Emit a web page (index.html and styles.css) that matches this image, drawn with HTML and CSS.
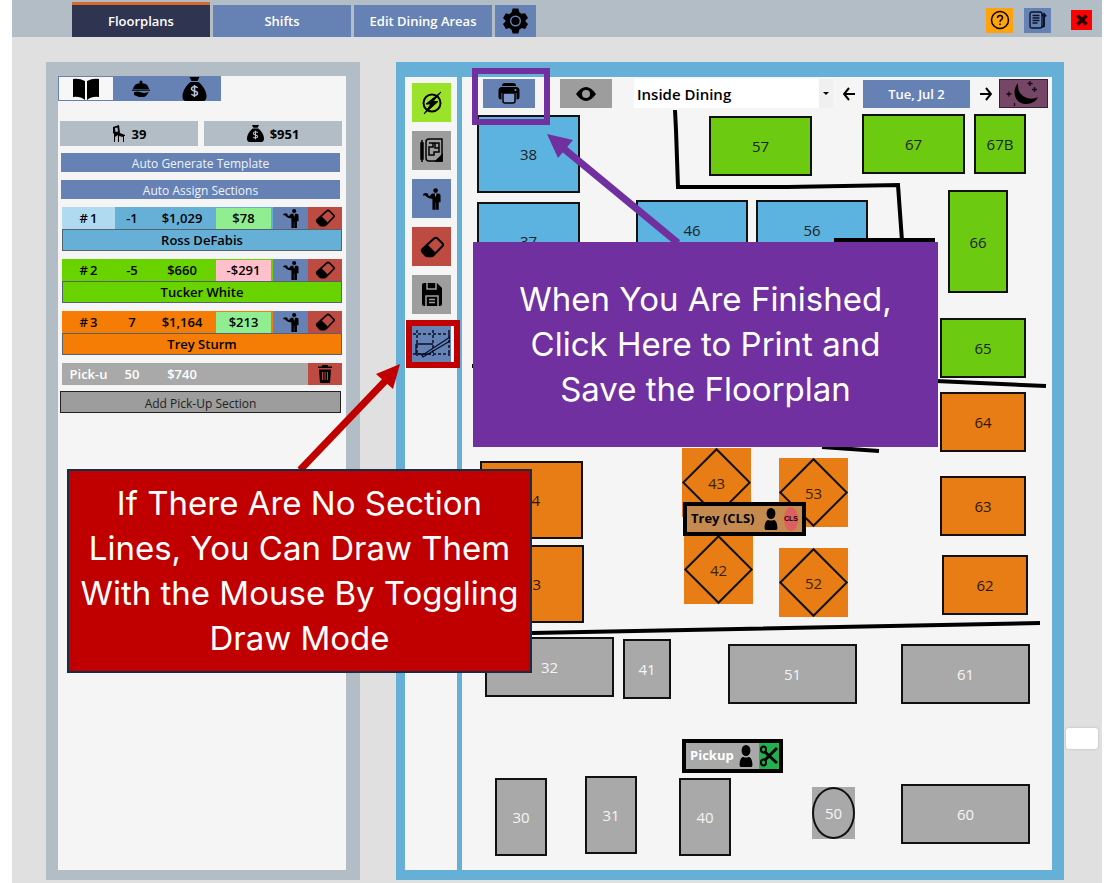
FILE: index.html
```html
<!DOCTYPE html>
<html lang="en">
<head>
<meta charset="utf-8">
<title>Floorplans</title>
<link rel="stylesheet" href="styles.css">
</head>
<body>
<svg class="defs" width="0" height="0" aria-hidden="true">
  <symbol id="i-bag" viewBox="0 0 24 24"><path d="M7 0h10l-2 4H9zM8 5h8c4 3 8 9 8 14 0 3-1 5-4 5H4c-3 0-4-2-4-5C0 14 4 8 8 5z"/><path d="M15 11c-1-2-6-2-6 1 0 2.500 6 1.500 6 4 0 3-5 3-6 1M12 8v12" fill="none" stroke="#b9c6dd" stroke-width="1.500"/></symbol>
  <symbol id="i-waiter" viewBox="0 0 20 24"><circle cx="14" cy="2.600" r="2.600"/><path d="M10 6h7.500q2 0 2 2v7.500h-2V24h-7V12L6 11 2.500 8.500l1-1.500 4 1.800z"/><path d="M0 8c0-3.600 6-3.600 6 0z"/><path d="M13 6l1 4 1-4z" fill="#8fa2cd"/><path d="M14 16v8" stroke="#53689a" stroke-width=".6"/></symbol>
  <symbol id="i-eraser" viewBox="0 0 24 22"><path d="M14 2.500 2.500 13q-1.500 1.500 0 3l3 3.500q1 .8 2 .8h4q1 0 2-1L22.500 10q1.200-1 0-2.500L17.500 2.500q-1.700-1.600-3.500 0z" fill="none" stroke="#000" stroke-width="2"/><path d="M7.500 8.500l8.500 8.500-3.500 3.300h-6L2 15z"/></symbol>
  <symbol id="i-person" viewBox="0 0 14 24"><ellipse cx="7" cy="6" rx="4.800" ry="6"/><path d="M0 22c0-6 2-9 4-9q3 1.500 6 0c2 0 4 3 4 9q0 2-2 2H2q-2 0-2-2z"/></symbol>
</svg>
<div class="app">
  <header class="topbar">
    <nav class="tabs">
      <button class="tab tab-active">Floorplans</button>
      <button class="tab">Shifts</button>
      <button class="tab">Edit Dining Areas</button>
      <button class="tab tab-gear" aria-label="Settings"><svg width="25" height="26" viewBox="0 0 26 26"><path d="M10 0h6l1 4 2.500 1.500L23 5l3 5-2.600 2.600v1L26 16l-3 5.200-3.600-1L17 22 16 26h-6l-1-4-2.500-1.800-3.500 1L0 16l2.600-2.500v-1L0 10l3-5 3.500 1L9 4z"/><circle cx="13" cy="13" r="5" fill="none" stroke="#6682b5" stroke-width="1.500"/></svg></button>
    </nav>
    <div class="actions">
      <button class="action help" aria-label="Help"><svg width="20" height="20" viewBox="0 0 20 20" fill="none" stroke="#000" stroke-width="1.500"><circle cx="10" cy="10" r="8.500"/><path d="M7.500 8c0-3.500 5-3 5-.3 0 2-2.500 2-2.500 4.300M10 13.500v1.600"/></svg></button>
      <button class="action notes" aria-label="Notes"><svg width="18" height="18" viewBox="0 0 18 18" fill="none" stroke="#0b1326" stroke-width="1.400"><path d="M3 1h8q2 0 2 2v12q0 2-2 2H3q-2 0-2-2V3q0-2 2-2zM3.500 4.500h7M3.500 7h7M3.500 9.500h7M3.500 12h5"/><path d="M13 5l2-2 2 2.500M15 4v11l-2 1" stroke-width="2"/></svg></button>
      <button class="action close" aria-label="Close"><svg width="12" height="12" viewBox="0 0 12 12" stroke="#200" stroke-width="3.500"><path d="M1.500 1.500l9 9M10.500 1.500l-9 9"/></svg></button>
    </div>
  </header>

  <main class="workspace">
    <aside class="panel sections">
      <div class="panel-body">
        <div class="view-tabs">
          <button class="view view-on" aria-label="Template"><svg width="28" height="22" viewBox="0 0 28 22"><path d="M13 3Q7 0 1 1v18q7-1 12 3zM15 3q6-3 12-2v18q-7-1-12 3z"/></svg></button>
          <button class="view" aria-label="Service"><svg width="20" height="18" viewBox="0 0 20 18"><circle cx="10" cy="2" r="1.500"/><path d="M2 9q1-6 8-6t8 6zM1 9.500h18v1.200H1zM3 12l4-.5 6 1.500 5-1-3 4q-1 1-3 1H8l-5-2z"/></svg></button>
          <button class="view" aria-label="Sales"><svg width="25" height="24"><use href="#i-bag"/></svg></button>
        </div>
        <div class="stats">
          <div class="stat"><svg width="14" height="18" viewBox="0 0 14 18"><path d="M1 2l6-2 1 8 5 2v1h-1v6h-1v-5l-4-1v6H6v-7l-3 2v5H2V9L1 8zM3 3l.5 4L6 6.500 5.500 2.500z" fill-rule="evenodd"/></svg>39</div>
          <div class="stat"><svg width="17" height="17"><use href="#i-bag"/></svg>$951</div>
        </div>
        <button class="auto">Auto Generate Template</button>
        <button class="auto">Auto Assign Sections</button>

        <section class="card blue">
          <div class="cells"><span class="num">#&thinsp;1</span><span>-1</span><span>$1,029</span><span class="diff up">$78</span><button class="assign" aria-label="Assign server"><svg width="16" height="19"><use href="#i-waiter"/></svg></button><button class="erase" aria-label="Clear section"><svg width="20" height="18"><use href="#i-eraser"/></svg></button></div>
          <div class="server">Ross DeFabis</div>
        </section>
        <section class="card green">
          <div class="cells"><span class="num">#&thinsp;2</span><span>-5</span><span>$660</span><span class="diff down">-$291</span><button class="assign" aria-label="Assign server"><svg width="16" height="19"><use href="#i-waiter"/></svg></button><button class="erase" aria-label="Clear section"><svg width="20" height="18"><use href="#i-eraser"/></svg></button></div>
          <div class="server">Tucker White</div>
        </section>
        <section class="card orange">
          <div class="cells"><span class="num">#&thinsp;3</span><span>7</span><span>$1,164</span><span class="diff up">$213</span><button class="assign" aria-label="Assign server"><svg width="16" height="19"><use href="#i-waiter"/></svg></button><button class="erase" aria-label="Clear section"><svg width="20" height="18"><use href="#i-eraser"/></svg></button></div>
          <div class="server">Trey Sturm</div>
        </section>
        <section class="card grey">
          <div class="cells"><span class="num">Pick-u</span><span>50</span><span>$740</span><span></span><span></span><button class="erase" aria-label="Delete section"><svg width="14" height="18" viewBox="0 0 14 18"><path d="M0 3V1.500h4V0h6v1.500h4V3zM1 4.500h12L12 18H2z"/><path d="M4.500 7v8M7 7v8M9.500 7v8" stroke="#be4b42"/></svg></button></div>
        </section>
        <button class="add">Add Pick-Up Section</button>
      </div>
    </aside>

    <section class="panel floor">
      <div class="tools">
        <button class="tool lime" aria-label="Auto"><svg width="22" height="24" viewBox="0 0 22 24"><circle cx="11" cy="12" r="8.500" fill="none" stroke="#000" stroke-width="2"/><path d="M20 1 5 13h5L3 23l14-12.500h-5z" stroke="#000" stroke-width="1"/></svg></button>
        <button class="tool silver" aria-label="Blueprint"><svg width="24" height="26" viewBox="0 0 24 26" fill="none" stroke="#000" stroke-width="1.500"><path d="M2 2v22M1 5h2v16H1z"/><path d="M6 4q0-3 3-3h13v22H9q-3 0-3-3z"/><path d="M9 5h10v9h-5v3H9v-8h4V5M9 9h4M15 5v5h4"/><path d="M22 17v6h-6z" fill="#000"/></svg></button>
        <button class="tool steel" aria-label="Servers"><svg width="18" height="22"><use href="#i-waiter"/></svg></button>
        <button class="tool red" aria-label="Erase"><svg width="24" height="22"><use href="#i-eraser"/></svg></button>
        <button class="tool silver" aria-label="Save"><svg width="20" height="23" viewBox="0 0 20 23"><path d="M0 2q0-2 2-2h13l5 5v16q0 2-2 2H2q-2 0-2-2z"/><path d="M5 0v6h9V0M4 23v-10h12v10M7 16.500h6M7 19.500h6" fill="none" stroke="#9d9d9d" stroke-width="1.500"/></svg></button>
        <button class="tool steel" aria-label="Draw lines"><svg width="37" height="30" viewBox="0 0 37 30" fill="none" stroke="#07102a"><path d="M0 6h37M4 2v26M20 2v26M36 2v26M0 26h37" stroke-dasharray="3 2" stroke-width="1.500"/><path d="M3 16h17M3 16v10h15M9 27.500 37 9v4L10 29z" stroke-width="1.300"/></svg></button>
      </div>
      <div class="plan">
        <div class="toolbar">
          <button class="tbtn print" aria-label="Print"><svg width="22" height="21" viewBox="0 0 22 21"><path d="M4 3q0-3 3-3h8q3 0 3 3zM4 4h14q3.500 0 3.500 3.500V14q0 2.500-3 2.500V10h-15v6.500q-3 0-3-2.500V7.500Q.5 4 4 4z"/><path d="M5 10h12v8q0 2-2 2H7q-2 0-2-2z" fill="#7f98c8" stroke="#000" stroke-width="1.500"/><circle cx="17.500" cy="7" r="1" fill="#7f98c8"/></svg></button>
          <button class="tbtn eye" aria-label="Preview"><svg width="20" height="14" viewBox="0 0 20 14"><path d="M0 7q10-14 20 0Q10 21 0 7z"/><circle cx="10" cy="7" r="4" fill="#9d9d9d"/></svg></button>
          <div class="area"><select aria-label="Dining area"><option>Inside Dining</option></select></div>
          <button class="step" aria-label="Previous day"><svg width="12" height="14" viewBox="0 0 12 14" fill="none" stroke="#000" stroke-width="2"><path d="M12 7H1M6 1 1 7l5 6"/></svg></button>
          <button class="date">Tue, Jul 2</button>
          <button class="step" aria-label="Next day"><svg width="12" height="14" viewBox="0 0 12 14" fill="none" stroke="#000" stroke-width="2"><path d="M0 7h11M6 1l5 6-5 6"/></svg></button>
          <button class="night" aria-label="Dinner shift"><svg width="36" height="26" viewBox="0 0 36 26"><path d="M12 2C5 10 9 23 20 23q9 0 12-7-5 3-11 1Q11 14 12 2z"/><path d="M3 10.500v5M.5 13h5M24 0v5M21.500 2.500h5M28.500 6v5M26 8.500h5M8.500 22v3" stroke="#150812" stroke-width="1.300"/></svg></button>
        </div>
        <div class="scene">
          <div class="table t38 blue-t">38</div><div class="table t37 blue-t">37</div>
          <div class="table t46 blue-t">46</div><div class="table t56 blue-t">56</div>
          <div class="table t57 green-t">57</div><div class="table t67 green-t">67</div>
          <div class="table t67b green-t">67B</div><div class="table t66 green-t">66</div>
          <div class="table t65 green-t">65</div><div class="table t64 orange-t">64</div>
          <div class="table t63 orange-t">63</div><div class="table t62 orange-t">62</div>
          <div class="table t34 orange-t">34</div><div class="table t33 orange-t">33</div>
          <div class="table diamond t43">43</div><div class="table diamond t53">53</div>
          <div class="table diamond t42">42</div><div class="table diamond t52">52</div>
          <div class="table t32 grey-t">32</div><div class="table t41 grey-t">41</div>
          <div class="table t51 grey-t">51</div><div class="table t61 grey-t">61</div>
          <div class="table t30 grey-t">30</div><div class="table t31 grey-t">31</div>
          <div class="table t40 grey-t">40</div><div class="table t50 grey-t"><span class="round">50</span></div>
          <div class="table t60 grey-t">60</div>
          <svg class="lines" fill="none" stroke="#000" stroke-width="4"><path d="M213 0l1 20 2 57h109l111-2 4 56M372 130h101M10 256h4M474 271l110 5M360 337l57 4M70 523l508-10"/></svg>
          <div class="tag tag-trey"><b>Trey (CLS)</b><svg width="14" height="22"><use href="#i-person"/></svg><span class="cls">CLS</span></div>
          <div class="tag tag-pickup"><b>Pickup</b><svg width="14" height="22"><use href="#i-person"/></svg><span class="cut"><svg width="18" height="22" viewBox="0 0 18 22" fill="none" stroke="#000" stroke-width="2"><ellipse cx="3.500" cy="4.500" rx="2.500" ry="3"/><ellipse cx="3.500" cy="17.500" rx="2.500" ry="3"/><path d="M5 7l12 11M5 15 17 3" stroke-width="3"/></svg></span></div>
        </div>
      </div>
    </section>
  </main>
  <div class="handle"></div>
</div>

<svg class="marks">
  <rect x="475" y="71" width="72" height="51" fill="none" stroke="#7030a0" stroke-width="6"/>
  <path d="M678 243 563 148" stroke="#7030a0" stroke-width="7"/><path d="M547 134l26 6-15 18z" fill="#7030a0"/>
  <rect x="409" y="323" width="48" height="42" fill="none" stroke="#c00000" stroke-width="6"/>
  <path d="M300 470l88-92" stroke="#c00000" stroke-width="7"/><path d="M400 364l-7 25-17-15z" fill="#c00000"/>
</svg>
<div class="callout callout-print">When You Are Finished,<br>Click Here to Print and<br>Save the Floorplan</div>
<div class="callout callout-draw">If There Are No Section<br>Lines, You Can Draw Them<br>With the Mouse By Toggling<br>Draw Mode</div>
</body>
</html>
```
FILE: styles.css
```css
*, *::before, *::after { box-sizing: border-box; }
body {
  margin: 0;
  padding: 0 12px;
  position: relative;
  background: #fff;
  color: #000;
  font: 13px/20px "Open Sans", "Noto Sans", sans-serif;
}
button { border: 0; padding: 0; margin: 0; font: inherit; color: inherit; display: flex; align-items: center; justify-content: center; }
svg { display: block; flex: none; }
.defs { position: absolute; }

.app { position: relative; min-height: 100vh; background: #e0e0e0; display: flex; flex-direction: column; }

.topbar { height: 37px; background: #b2bdc6; display: flex; justify-content: space-between; padding: 0 10px 0 60px; }
.tabs { display: flex; align-items: flex-end; gap: 3px; }
.tab { width: 138px; height: 32px; background: #6682b5; color: #fff; font-weight: 600; }
.tab-active { height: 35px; background: #2f3550; border-top: 3px solid #d9692a; }
.tab-gear { width: 41px; }
.actions { display: flex; align-items: center; padding-top: 3px; }
.action { width: 27px; height: 25px; }
.help { background: #ffa30c; }
.notes { background: #6682b5; margin-left: 11px; }
.close { background: #f00; width: 21px; height: 20px; margin-left: 20px; }

.workspace { flex: 1; display: grid; grid-template-columns: 314px 1fr; gap: 36px; padding: 25px 38px 3px 34px; }
.panel { background: #b2bdc6; padding: 14px 14px 10px 12px; }
.panel-body { background: #f5f5f5; height: 100%; }
.view-tabs { display: flex; width: 163px; height: 25px; background: #6682b5; overflow: hidden; }
.view { flex: 1; background: none; }
.view-on { background: #f7f7f7; border: 1px solid #6682b5; }
.stats { display: flex; gap: 6px; margin: 20px 4px 7px 2px; }
.stat { flex: 1; height: 25px; background: #b2bdc6; display: flex; align-items: center; justify-content: center; gap: 6px; font-weight: 700; }
.auto { width: 279px; height: 19px; margin: 0 0 8px 3px; padding-top: 3px; background: #6682b5; color: #eef2fa; font-size: 12px; line-height: 16px; }

.card { width: 280px; margin: 0 0 8px 4px; font-weight: 600; }
.cells { display: grid; grid-template-columns: 53px 34px 66px 58px 35px 34px; height: 22px; text-align: center; line-height: 22px; }
.cells > span { white-space: nowrap; }
.assign { background: #6682b5; }
.erase { background: #be4b42; }
.cells .diff { margin: 1px 2px 0 1px; line-height: 20px; }
.up { background: #90ee90; }
.down { background: #ffc0cb; }
.server { height: 22px; border: 1px solid #55646c; text-align: center; line-height: 20px; }
.blue { background: #66b0d8; }
.blue .num { background: #b0daef; }
.green { background: #69d300; }
.orange { background: #f57c05; }
.grey { background: #a9a9a9; color: #fff; margin-bottom: 6px; }
.add { width: 281px; height: 22px; margin-left: 2px; padding-top: 3px; background: #9d9d9d; border: 1px solid #222; color: #222; font-size: 12px; line-height: 16px; }

.floor { background: #66b0d8; padding: 15px 12px 10px 9px; display: flex; gap: 5px; }
.tools { width: 52px; background: #f5f5f5; padding: 6px 6px 0 7px; display: flex; flex-direction: column; gap: 9px; }
.tool { height: 39px; width: 39px; }
.lime { background: #9be22a; }
.silver { background: #9d9d9d; }
.steel { background: #6682b5; }
.red { background: #be4b42; }
.plan { flex: 1; min-width: 0; background: #f5f5f5; }
.toolbar { height: 33px; display: flex; align-items: center; padding: 0 4px 0 21px; }
.tbtn { width: 52px; height: 29px; }
.print { background: #6682b5; }
.eye { background: #9d9d9d; margin-left: 25px; }
.area { position: relative; flex: 1; margin: 0 10px 0 22px; height: 29px; background: #fff; }
.area select { appearance: none; border: 0; width: 100%; height: 100%; padding: 0 3px; background: linear-gradient(to left, #f0f0f0 14px, #fff 14px); color: #000; font: 600 15px "Open Sans", "Noto Sans", sans-serif; }
.area::after { content: ""; position: absolute; right: 4px; top: 13px; border: 3px solid transparent; border-top-color: #000; }
.step { width: 12px; height: 28px; background: none; }
.date { width: 107px; height: 28px; margin: 0 10px 0 8px; background: #6682b5; color: #fff; font-weight: 600; }
.night { width: 49px; height: 29px; margin-left: 7px; background: #764667; border: 1px solid #3a1f32; }

.scene { position: relative; min-height: 750px; }
.lines { position: absolute; inset: 0; width: 100%; height: 100%; }
.table { position: absolute; display: flex; align-items: center; justify-content: center; border: 2px solid #111; font-size: 15px; color: #1c2226; }
.blue-t { background: #5cb3e0; }
.green-t { background: #6ccb10; }
.orange-t { background: #e77d14; color: #2a1708; }
.grey-t { background: #a9a9a9; color: #f5f5f5; }
.t38 { left: 15px; top: 5px; width: 103px; height: 78px; }
.t37 { left: 15px; top: 92px; width: 103px; height: 77px; }
.t46 { left: 174px; top: 90px; width: 112px; height: 60px; }
.t56 { left: 294px; top: 90px; width: 112px; height: 60px; }
.t57 { left: 247px; top: 6px; width: 103px; height: 60px; }
.t67 { left: 400px; top: 4px; width: 103px; height: 60px; }
.t67b { left: 512px; top: 4px; width: 52px; height: 60px; }
.t66 { left: 486px; top: 80px; width: 60px; height: 103px; }
.t65 { left: 478px; top: 208px; width: 86px; height: 60px; }
.t64 { left: 478px; top: 282px; width: 86px; height: 60px; }
.t63 { left: 478px; top: 366px; width: 86px; height: 60px; }
.t62 { left: 480px; top: 445px; width: 86px; height: 60px; }
.t34 { left: 18px; top: 351px; width: 103px; height: 78px; }
.t33 { left: 19px; top: 435px; width: 103px; height: 78px; }
.t32 { left: 23px; top: 527px; width: 129px; height: 60px; }
.t41 { left: 161px; top: 529px; width: 48px; height: 60px; }
.t51 { left: 266px; top: 534px; width: 129px; height: 60px; }
.t61 { left: 439px; top: 534px; width: 129px; height: 60px; }
.t30 { left: 33px; top: 668px; width: 52px; height: 78px; }
.t31 { left: 123px; top: 666px; width: 52px; height: 78px; }
.t40 { left: 217px; top: 668px; width: 52px; height: 78px; }
.t60 { left: 439px; top: 674px; width: 129px; height: 60px; }
.t50 { left: 350px; top: 677px; width: 43px; height: 52px; border: 0; }
.round { width: 100%; height: 100%; border: 2px solid #111; border-radius: 50%; display: flex; align-items: center; justify-content: center; }
.diamond { width: 69px; height: 69px; border: 0; background: #e77d14; color: #3a1f08; }
.diamond::before { content: ""; position: absolute; left: 10px; top: 10px; width: 49px; height: 49px; border: 2px solid #111; transform: rotate(45deg); }
.t43 { left: 220px; top: 338px; }
.t53 { left: 317px; top: 348px; }
.t42 { left: 222px; top: 425px; }
.t52 { left: 317px; top: 438px; }
.tag { position: absolute; display: flex; align-items: center; justify-content: space-between; height: 34px; border: 4px solid #000; padding-left: 4px; }
.tag b { line-height: 22px; padding-bottom: 3px; }
.tag-trey { left: 221px; top: 392px; width: 123px; background: #c48a50; padding-right: 4px; }
.tag-trey b { margin-right: 4px; }
.tag-pickup { left: 220px; top: 629px; width: 101px; background: #a9a9a9; }
.tag-pickup b { color: #fff; }
.cls { width: 14px; height: 24px; border-radius: 50%; background: #dd5f5f; color: #200; font: 700 7px/24px "Liberation Sans", sans-serif; display: flex; justify-content: center; }
.cut { height: 100%; width: 20px; background: #22b14c; display: flex; align-items: center; justify-content: center; }

.handle { position: absolute; right: 4px; top: 728px; width: 32px; height: 21px; background: #fff; border-radius: 3px; box-shadow: 0 0 2px #aaa; }
.marks { position: absolute; left: 0; top: 0; width: 100%; height: 100%; pointer-events: none; }
.callout { position: absolute; color: #fff; text-align: center; white-space: nowrap; font: 33px/45px Inter, "Open Sans", sans-serif; display: grid; align-content: center; justify-content: center; }
.callout-print { left: 473px; top: 242px; width: 465px; height: 205px; background: #7030a0; }
.callout-draw { left: 67px; top: 469px; width: 465px; height: 204px; background: #c00000; border: 2px solid #172c45; }
```
